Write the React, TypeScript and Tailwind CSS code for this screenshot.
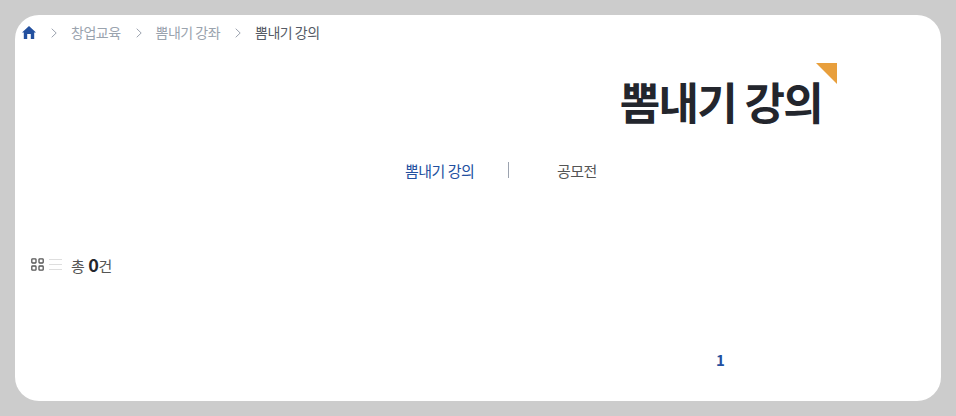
const FONT = "font-['Noto_Sans_CJK_KR','Noto_Sans',sans-serif]";

function Chevron() {
  return (
    <svg width="6" height="10" viewBox="0 0 6 10" fill="none" className="shrink-0">
      <path d="M0.7 0.7 L5.2 5 L0.7 9.3" stroke="#9ca3af" strokeWidth="1" />
    </svg>
  );
}

function Home() {
  return (
    <svg width="14" height="13" viewBox="0 0 14 13" className="shrink-0">
      <path
        fill="#23509f"
        d="M7 0 L14 6.6 L12.2 6.6 L12.2 13 L8.8 13 L8.8 8 L5.2 8 L5.2 13 L1.8 13 L1.8 6.6 L0 6.6 Z"
      />
    </svg>
  );
}

function GridIcon() {
  return (
    <svg width="13" height="13" viewBox="0 0 13 13" fill="none" stroke="#555" strokeWidth="1.3">
      <rect x="0.8" y="0.8" width="4.2" height="4.2" rx="0.8" />
      <rect x="8" y="0.8" width="4.2" height="4.2" rx="0.8" />
      <rect x="0.8" y="8" width="4.2" height="4.2" rx="0.8" />
      <rect x="8" y="8" width="4.2" height="4.2" rx="0.8" />
    </svg>
  );
}

function ListIcon() {
  return (
    <svg width="13" height="13" viewBox="0 0 13 13" fill="none" stroke="#dedede" strokeWidth="1.2">
      <path d="M0 1.5H13M0 6.5H13M0 11.5H13" />
    </svg>
  );
}

export default function App() {
  return (
    <div className={`${FONT} w-[956px] h-[416px] bg-[#cccccc] pt-[15px] pr-[15px] pb-[15px] pl-[15px] overflow-hidden`}>
      <div className="w-[926px] h-[386px] bg-white rounded-[24px] flex flex-col overflow-hidden">
        <nav className="h-[35px] flex items-center pl-[7px] text-[14px] tracking-[-0.5px] text-[#9aa3ae]">
          <Home />
          <span className="ml-[15px]"><Chevron /></span>
          <span className="ml-[14px]">창업교육</span>
          <span className="ml-[15px]"><Chevron /></span>
          <span className="ml-[14px]">뽐내기 강좌</span>
          <span className="ml-[15px]"><Chevron /></span>
          <span className="ml-[14px] text-[#555b66]">뽐내기 강의</span>
        </nav>

        <div className="h-[87px] flex justify-end pr-[104px] pt-[13px]">
          <div className="relative pr-[15px]">
            <h1 className="mt-[4px] text-[44px] leading-[68px] font-bold tracking-[-1.7px] text-[#23262d] whitespace-nowrap">뽐내기 강의</h1>
            <span className="absolute right-0 top-0 w-0 h-0 border-t-[21px] border-l-[21px] border-t-[#e89f3c] border-l-transparent" />
          </div>
        </div>

        <div className="h-[87px] flex items-start pl-[390px] pt-[20px] text-[15px] tracking-[-0.5px]">
          <span className="text-[#23509f] leading-[28px] w-[103px]">뽐내기 강의</span>
          <span className="w-px h-[16px] bg-[#9ca3af] mt-[5px]" />
          <span className="ml-[48px] text-[#555555] leading-[28px]">공모전</span>
        </div>

        <div className="mt-[26px] h-[28px] flex items-center pl-[16px]">
          <GridIcon />
          <span className="ml-[5px]"><ListIcon /></span>
          <span className="ml-[9px] text-[15px] text-[#555555] tracking-[-0.5px] leading-none flex items-baseline">
            총 <b className="ml-[4px] text-[18px] text-[#23262d] font-bold">0</b>건
          </span>
        </div>

        <div className="mt-[71px] pl-[701px] text-[15px] font-bold text-[#23509f] leading-[22px]">1</div>
      </div>
    </div>
  );
}
